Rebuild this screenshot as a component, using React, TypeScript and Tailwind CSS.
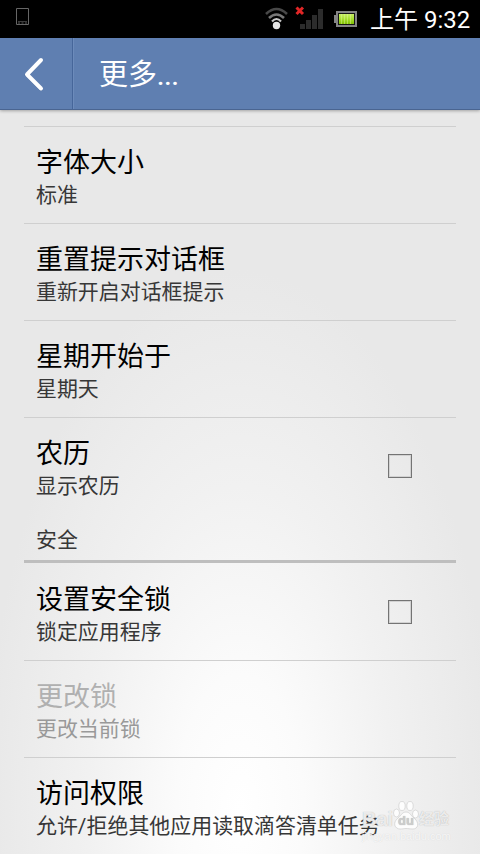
import clsx from "clsx";

type Item = {
  title: string;
  summary: string;
  checkbox?: boolean;
  disabled?: boolean;
};

const generalItems: Item[] = [
  { title: "字体大小", summary: "标准" },
  { title: "重置提示对话框", summary: "重新开启对话框提示" },
  { title: "星期开始于", summary: "星期天" },
  { title: "农历", summary: "显示农历", checkbox: true },
];

const securityItems: Item[] = [
  { title: "设置安全锁", summary: "锁定应用程序", checkbox: true },
  { title: "更改锁", summary: "更改当前锁", disabled: true },
  { title: "访问权限", summary: "允许/拒绝其他应用读取滴答清单任务" },
];

function StatusBar() {
  return (
    <div className="flex h-[38px] shrink-0 items-start bg-black text-white">
      {/* Phone notification */}
      <svg className="mt-[8px] ml-[16px]" width="13" height="17" viewBox="0 0 13 17" fill="none">
        <path d="M.5 .5h12v16H.5z" stroke="#666" />
        <path d="M2 13.500h9" stroke="#3c3c3c" />
        <path d="M2 15h2M5.500 15h2M9 15h2" stroke="#5a5a5a" />
      </svg>

      {/* Wi-Fi */}
      <svg className="mt-[6px] ml-[235px]" width="26" height="24" viewBox="0 0 26 24" fill="none">
        <path d="M2 8Q12.500 -2 23 8" stroke="#484848" strokeWidth="2.600" />
        <path d="M5 12Q12.500 5 20 12" stroke="#777" strokeWidth="2.600" />
        <path d="M8 15.500Q12.500 10.500 17 15.500" stroke="#c8c8c8" strokeWidth="2.200" />
        <circle cx="12.500" cy="19.500" r="3.700" fill="#e6e6e6" />
      </svg>

      {/* Signal */}
      <svg className="mt-[6px] ml-[5px]" width="29" height="24" viewBox="0 0 29 24" fill="none">
        <path d="M5 18h5v5H5zM11 14h5v9h-5zM17 9h5v14h-5zM23 3h5v20h-5z" fill="#2c2c2c" />
        <path d="M1.500 1.500l6.500 6.500M8 1.500l-6.500 6.500" stroke="#e12626" strokeWidth="3" />
      </svg>

      {/* Battery */}
      <svg className="mt-[11px] ml-[10px]" width="24" height="16" viewBox="0 0 24 16">
        <defs>
          <linearGradient id="charge" x1="0" y1="0" x2="0" y2="1">
            <stop offset="0" stopColor="#c8ee66" />
            <stop offset="0.500" stopColor="#a7de30" />
            <stop offset="1" stopColor="#80c000" />
          </linearGradient>
        </defs>
        <path d="M2 0h21v16H2v-4H0V4h2z" fill="#858585" />
        <path d="M4 2h17v12H4z" fill="#171717" />
        <path d="M5 3h15v10H5z" fill="url(#charge)" />
        <path d="M7.500 3v10M10.500 3v10M13.500 3v10M16.500 3v10" stroke="#e0f7a0" strokeOpacity=".45" />
      </svg>

      <span className="mt-[2px] ml-[12px] text-[24px] leading-[36px] whitespace-nowrap">
        上午 9:32
      </span>
    </div>
  );
}

function ActionBar() {
  return (
    <header className="z-10 flex h-[72px] shrink-0 border-b border-[#4a6591] bg-[#5f7fb1] text-white shadow-[0_1px_3px_rgba(0,0,0,0.3)]">
      <button className="flex w-[73px] shrink-0 items-center border-r border-[#46669a]">
        <svg className="ml-[22px]" width="22" height="36" viewBox="0 0 22 36" fill="none">
          <path d="M19 4L5 19L19 33" stroke="#3e5f91" strokeOpacity=".6" strokeWidth="4" strokeLinecap="round" />
          <path d="M19 4L5 18.500L19 32.500" stroke="#fff" strokeWidth="4" strokeLinecap="round" strokeLinejoin="round" />
        </svg>
      </button>
      <h1 className="border-l border-[#6c8bbb] pt-[2px] pl-[25px] text-[29px] leading-[70px]">
        更多<span className="text-[26px] font-medium">...</span>
      </h1>
    </header>
  );
}

function Row({ item }: { item: Item }) {
  return (
    <div className="flex h-[97px] items-start pl-3">
      <div className={clsx("flex-1 whitespace-nowrap", item.disabled ? "text-[#b0b0b0]" : "text-black")}>
        <p className="mt-[18px] text-[27px] leading-[36px]">{item.title}</p>
        <p
          className={clsx(
            "-mt-px text-[20.95px] leading-[30px]",
            item.disabled ? "text-[#999]" : "text-[#373737]"
          )}
        >
          {item.summary}
        </p>
      </div>
      {item.checkbox && (
        <span className="mt-[36px] mr-[44px] size-[24px] border border-[#747474] ring-1 ring-[#d2d2d2] ring-inset" />
      )}
    </div>
  );
}

function Watermark() {
  return (
    <div className="absolute top-[799px] left-[362px] w-[92px] font-['Liberation_Sans','Noto_Sans_CJK_SC',sans-serif] text-white/75">
      <div className="flex h-[31px] items-end leading-[22px] [text-shadow:0_0_1px_#aaa]">
        <span className="w-[31px] text-[20px] font-bold">Bai</span>
        <span className="relative flex h-[30px] w-[26px] items-end justify-center pb-px">
          <svg className="absolute inset-0" width="26" height="30" viewBox="0 0 26 30" fill="#fff" fillOpacity=".85" stroke="#c8c8c8" strokeWidth=".6">
            <ellipse cx="3.500" cy="13" rx="3" ry="4" />
            <ellipse cx="9" cy="6" rx="3.200" ry="4.500" />
            <ellipse cx="17" cy="6" rx="3.200" ry="4.500" />
            <ellipse cx="22.500" cy="14" rx="3" ry="4" />
            <path d="M13 12c-4 0-5 4-8 6-6 5-3 11 2 11 3 0 4-.5 6-.5s4 .5 7 .5c5 0 7-6 1-11-3-2-4-6-8-6z" />
          </svg>
          <span className="relative text-[13px] leading-[16px] font-bold text-[#cdcdcd]">du</span>
        </span>
        <span className="text-[15px] font-bold">经验</span>
      </div>
      <p className="text-[11px] leading-[12px] text-white/80 [text-shadow:0_0_1px_#ccc]">
        jingyan.baidu.com
      </p>
    </div>
  );
}

export default function App() {
  return (
    <div className="relative flex h-[854px] w-[480px] flex-col overflow-hidden bg-[#e8e8e8] font-['Roboto','Noto_Sans_CJK_SC',sans-serif]">
      <StatusBar />
      <ActionBar />
      <main className="flex-1 overflow-hidden bg-[radial-gradient(ellipse_255px_540px_at_240px_700px,#ffffff_0%,#fbfbfb_25%,#f1f1f1_60%,#e8e8e8_100%)] px-6 pt-4">
        <section className="divide-y divide-[#cfcfcf] border-t border-[#cfcfcf]">
          {generalItems.map((item) => (
            <Row key={item.title} item={item} />
          ))}
        </section>
        <h2 className="h-[48px] border-b-[3px] border-[#bebebe] pt-[10px] pl-3 text-[20.95px] leading-[30px] text-[#373737]">
          安全
        </h2>
        <section className="divide-y divide-[#cfcfcf] pt-px">
          {securityItems.map((item) => (
            <Row key={item.title} item={item} />
          ))}
        </section>
      </main>
      <Watermark />
    </div>
  );
}
